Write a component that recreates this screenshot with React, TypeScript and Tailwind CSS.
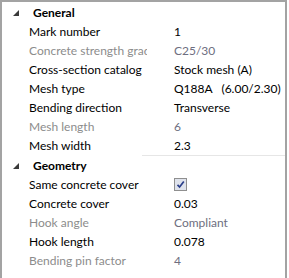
import React from "react";

type Row = { label: string; value?: string; dim?: boolean; check?: boolean };

const general: Row[] = [
  { label: "Mark number", value: "1" },
  { label: "Concrete strength grade", value: "C25/30", dim: true },
  { label: "Cross-section catalog", value: "Stock mesh (A)" },
  { label: "Mesh type", value: "Q188A\u00a0\u00a0\u00a0(6.00/2.30)" },
  { label: "Bending direction", value: "Transverse" },
  { label: "Mesh length", value: "6", dim: true },
  { label: "Mesh width", value: "2.3" },
];

const geometry: Row[] = [
  { label: "Same concrete cover", check: true },
  { label: "Concrete cover", value: "0.03" },
  { label: "Hook angle", value: "Compliant", dim: true },
  { label: "Hook length", value: "0.078" },
  { label: "Bending pin factor", value: "4", dim: true },
];

function Header({ title }: { title: string }) {
  return (
    <div className="flex h-[19px] items-center">
      <div className="flex w-[31px] shrink-0 items-center pl-[11px]">
        <svg width="6" height="6" viewBox="0 0 6 6">
          <polygon points="6,0 6,6 0,6" fill="#3a3a3a" />
        </svg>
      </div>
      <span className="font-bold text-black leading-[19px]">{title}</span>
    </div>
  );
}

function PropRow({ r }: { r: Row }) {
  return (
    <div className="flex h-[19px] items-center">
      <div
        className={`h-[19px] w-[145px] shrink-0 overflow-hidden whitespace-nowrap pl-[27px] leading-[19px] ${
          r.dim ? "text-[#8c8c8c]" : "text-black"
        }`}
      >
        {r.label}
      </div>
      <div className="pl-[27px] whitespace-nowrap leading-[19px]">
        {r.check ? (
          <div className="flex h-[13px] w-[13px] items-center justify-center border border-[#8f8f8f] bg-[#dfe3ec]">
            <svg width="9" height="9" viewBox="0 0 9 9">
              <path d="M1.5 4.8 L3.6 7 L7.8 1.5" stroke="#2a3f8a" strokeWidth="1.7" fill="none" />
            </svg>
          </div>
        ) : (
          <span className={r.dim ? "text-[#6e6e80]" : "text-black"}>{r.value}</span>
        )}
      </div>
    </div>
  );
}

export default function App() {
  return (
    <div className="h-[278px] w-[289px] bg-white" style={{ fontFamily: 'Lato, "Noto Sans", sans-serif' }}>
      <div className="h-full w-[287px] border-l-2 border-r-2 border-t-2 border-[#a3a3a3] pt-[1px] text-[12px]">
        <Header title="General" />
        {general.map((r) => (
          <PropRow key={r.label} r={r} />
        ))}
        <div className="ml-[140px] h-px bg-[#e6e6e6]" />
        <Header title="Geometry" />
        {geometry.map((r) => (
          <PropRow key={r.label} r={r} />
        ))}
      </div>
    </div>
  );
}
